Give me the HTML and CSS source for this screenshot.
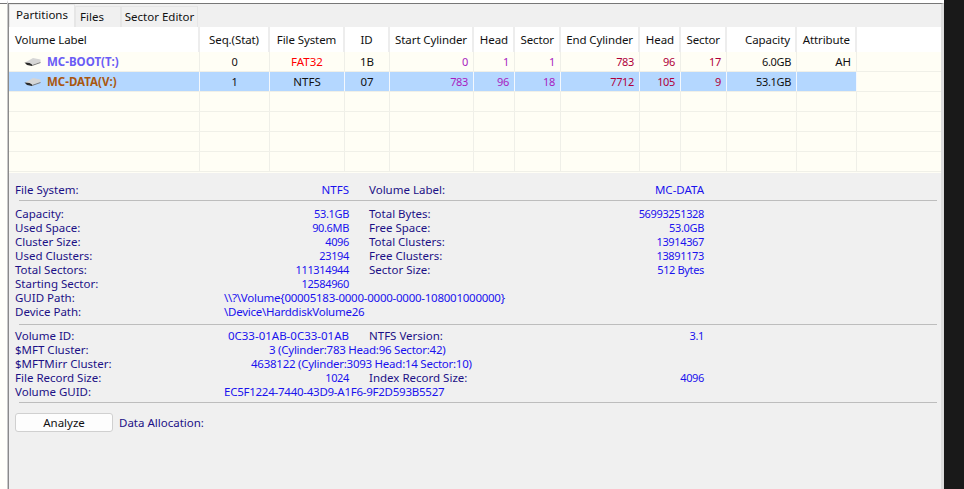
FILE: index.html
```html
<!DOCTYPE html>
<html>
<head>
<meta charset="utf-8">
<title>Partitions</title>
<link rel="stylesheet" href="styles.css">
</head>
<body>
<div class="app">
  <div class="leftstrip"></div>
  <div class="frame">
  <div class="panel">
    <div class="tabs">
      <div class="tab active">Partitions</div>
      <div class="tab t-files">Files</div>
      <div class="tab t-sector">Sector Editor</div>
    </div>
    <div class="table">
      <div class="row head">
        <div class="c c1 l">Volume Label</div><div class="c c2 m">Seq.(Stat)</div><div class="c c3 m">File System</div><div class="c c4 m">ID</div><div class="c c5 r">Start Cylinder</div><div class="c c6 r">Head</div><div class="c c7 r">Sector</div><div class="c c8 r">End Cylinder</div><div class="c c9 r">Head</div><div class="c c10 r">Sector</div><div class="c c11 r">Capacity</div><div class="c c12 r">Attribute</div><div class="c c13"></div>
      </div>
      <div class="row">
        <div class="c c1 vol boot"><svg class="disk" viewBox="0 0 17 9"><path d="M2 5 L9 1 L16.5 2.5 L16.5 5 L8 8 L2 6 Z" fill="#d6d6d6"/><path d="M8 8 L16.5 5 L16.5 6 L8 9 Z" fill="#7a7a7a"/><path d="M0.5 5.5 L5.5 6 L8 7.5 L8 9 L3 8 Z" fill="#2a2a2a"/></svg>MC-BOOT(T:)</div><div class="c c2 m n">0</div><div class="c c3 m red">FAT32</div><div class="c c4 m">1B</div><div class="c c5 r n pur">0</div><div class="c c6 r n pur">1</div><div class="c c7 r n pur">1</div><div class="c c8 r n mar">783</div><div class="c c9 r n mar">96</div><div class="c c10 r n mar">17</div><div class="c c11 r n">6.0GB</div><div class="c c12 r">AH</div><div class="c c13"></div>
      </div>
      <div class="row sel">
        <div class="c c1 vol data"><svg class="disk" viewBox="0 0 17 9"><path d="M2 5 L9 1 L16.5 2.5 L16.5 5 L8 8 L2 6 Z" fill="#d6d6d6"/><path d="M8 8 L16.5 5 L16.5 6 L8 9 Z" fill="#7a7a7a"/><path d="M0.5 5.5 L5.5 6 L8 7.5 L8 9 L3 8 Z" fill="#2a2a2a"/></svg>MC-DATA(V:)</div><div class="c c2 m n">1</div><div class="c c3 m">NTFS</div><div class="c c4 m">07</div><div class="c c5 r n pur">783</div><div class="c c6 r n pur">96</div><div class="c c7 r n pur">18</div><div class="c c8 r n mar">7712</div><div class="c c9 r n mar">105</div><div class="c c10 r n mar">9</div><div class="c c11 r n">53.1GB</div><div class="c c12 r"></div><div class="c c13 unsel"></div>
      </div>
      <div class="row"><div class="c c1"></div><div class="c c2"></div><div class="c c3"></div><div class="c c4"></div><div class="c c5"></div><div class="c c6"></div><div class="c c7"></div><div class="c c8"></div><div class="c c9"></div><div class="c c10"></div><div class="c c11"></div><div class="c c12"></div><div class="c c13"></div></div>
      <div class="row"><div class="c c1"></div><div class="c c2"></div><div class="c c3"></div><div class="c c4"></div><div class="c c5"></div><div class="c c6"></div><div class="c c7"></div><div class="c c8"></div><div class="c c9"></div><div class="c c10"></div><div class="c c11"></div><div class="c c12"></div><div class="c c13"></div></div>
      <div class="row"><div class="c c1"></div><div class="c c2"></div><div class="c c3"></div><div class="c c4"></div><div class="c c5"></div><div class="c c6"></div><div class="c c7"></div><div class="c c8"></div><div class="c c9"></div><div class="c c10"></div><div class="c c11"></div><div class="c c12"></div><div class="c c13"></div></div>
      <div class="row"><div class="c c1"></div><div class="c c2"></div><div class="c c3"></div><div class="c c4"></div><div class="c c5"></div><div class="c c6"></div><div class="c c7"></div><div class="c c8"></div><div class="c c9"></div><div class="c c10"></div><div class="c c11"></div><div class="c c12"></div><div class="c c13"></div></div>
    </div>
    <div class="info">
      <div class="grid first">
        <div class="k">File System:</div><div class="v a">NTFS</div><div class="k">Volume Label:</div><div class="v a">MC-DATA</div>
      </div>
      <div class="rule r1"></div>
      <div class="grid">
        <div class="k">Capacity:</div><div class="v">53.1GB</div><div class="k">Total Bytes:</div><div class="v">56993251328</div>
        <div class="k">Used Space:</div><div class="v">90.6MB</div><div class="k">Free Space:</div><div class="v">53.0GB</div>
        <div class="k">Cluster Size:</div><div class="v">4096</div><div class="k">Total Clusters:</div><div class="v">13914367</div>
        <div class="k">Used Clusters:</div><div class="v">23194</div><div class="k">Free Clusters:</div><div class="v">13891173</div>
        <div class="k">Total Sectors:</div><div class="v">111314944</div><div class="k">Sector Size:</div><div class="v">512 Bytes</div>
        <div class="k">Starting Sector:</div><div class="v">12584960</div><div class="k"></div><div class="v"></div>
        <div class="k">GUID Path:</div><div class="w">\\?\Volume{00005183-0000-0000-0000-108001000000}</div>
        <div class="k">Device Path:</div><div class="w">\Device\HarddiskVolume26</div>
      </div>
      <div class="rule r2"></div>
      <div class="grid">
        <div class="k">Volume ID:</div><div class="v a">0C33-01AB-0C33-01AB</div><div class="k">NTFS Version:</div><div class="v">3.1</div>
        <div class="k">$MFT Cluster:</div><div class="w w2">3 (Cylinder:783 Head:96 Sector:42)</div>
        <div class="k">$MFTMirr Cluster:</div><div class="w w3">4638122 (Cylinder:3093 Head:14 Sector:10)</div>
        <div class="k">File Record Size:</div><div class="v">1024</div><div class="k">Index Record Size:</div><div class="v">4096</div>
        <div class="k">Volume GUID:</div><div class="w">EC5F1224-7440-43D9-A1F6-9F2D593B5527</div>
      </div>
      <div class="rule r3"></div>
      <div class="actions">
        <button class="btn">Analyze</button>
        <div class="k alloc">Data Allocation:</div>
      </div>
    </div>
  </div>
  </div>
  <div class="rightgap"></div>
</div>
</body>
</html>
```
FILE: styles.css
```css
* { box-sizing: border-box; }
html, body { margin: 0; height: 100%; }
body { width: 964px; height: 489px; overflow: hidden; background: #191919; font-family: "Noto Sans", sans-serif; font-size: 11.5px; color: #111; }
.app { display: flex; height: 489px; background: #191919; }
.leftstrip { width: 8px; background: #fffffa; border-top: 3px solid #fff; border-right: 1px solid #c8c8c8; box-shadow: inset 0 1px 0 #777; }
.frame { width: 936px; height: 489px; padding-top: 3px; background: #fff; flex: none; }
.panel { height: 486px; background: #f0f0f0; border-top: 1px solid #777; border-left: 1px solid #8a8a8a; border-right: 3px solid #dcdcdc; display: flex; flex-direction: column; }
.rightgap { flex: 1; }
.tabs { display: flex; height: 23px; align-items: flex-end; }
.tab { height: 21px; line-height: 19px; background: #f0f0f0; border: 1px solid #e6e6e6; border-bottom: none; flex: none; }
.tab.active { height: 23px; width: 66px; line-height: 20px; background: #f8f8f8; text-align: center; }
.t-files { width: 46px; padding-left: 4px; }
.t-sector { width: 77px; text-align: center; }
.table { background: #fffef5; height: 146px; flex: none; }
.row { display: flex; height: 20px; border-bottom: 1px solid #f0f0e8; line-height: 19px; }
.row.head { height: 25px; line-height: 24px; background: #fff; border-bottom: none; }
.row.sel { line-height: 20px; }
.head .c { border-right: 2px solid #ededed; letter-spacing: -0.1px; padding-top: 1px; }
.c { border-right: 1px solid #efefe8; padding: 0 5px; white-space: nowrap; overflow: hidden; flex: none; }
.c13 { flex: 1; border-right: none; }
.head .c13 { border-right: none; }
.l { padding-left: 6px; }
.m { text-align: center; }
.r { text-align: right; }
.n { font-size: 11px; letter-spacing: -0.35px; }
.c1 { width: 191px; }
.c2 { width: 70px; }
.c3 { width: 75px; }
.c4 { width: 45px; }
.c5 { width: 84px; }
.c6 { width: 41px; }
.c7 { width: 46px; }
.c8 { width: 79px; }
.c9 { width: 41px; }
.c10 { width: 46px; }
.c11 { width: 70px; }
.c12 { width: 60px; }
.vol { font-weight: 700; display: flex; align-items: center; padding-left: 15px; }
.disk { width: 17px; height: 9px; margin-right: 6px; flex: none; }
.boot { color: #6a5cf5; }
.data { color: #a9570f; }
.sel .c { background: #b4d7ff; border-right-color: #f4f8fd; }
.sel .c.unsel { background: #fffef5; }
.red { color: #f00; }
.pur { color: #a81cc0; }
.mar { color: #b0003a; }
.info { padding: 10px 0 0 6px; }
.k { color: #1c1086; }
.v, .w { color: #1a12ee; white-space: nowrap; }
.v { text-align: right; padding-right: 20px; font-size: 11px; letter-spacing: -0.35px; }
.v.a { font-size: 11.5px; letter-spacing: 0; }
.grid { display: grid; grid-template-columns: 209px 145px 110px 245px; line-height: 14px; }
.w { grid-column: 2 / span 3; letter-spacing: -0.25px; }
.w2 { padding-left: 45px; }
.w3 { padding-left: 27px; }
.rule { height: 1px; background: #bdbdbd; margin-left: 4px; width: 918px; }
.first { margin-bottom: 3px; }
.r1 { margin-bottom: 6px; }
.r2 { margin-top: 5px; margin-bottom: 4px; }
.r3 { margin-top: 3px; margin-bottom: 10px; }
.actions { display: flex; align-items: center; }
.btn { width: 98px; height: 19px; margin: 0 6px 0 0; padding: 0; background: #fdfdfd; border: 1px solid #d0d0d0; border-radius: 3px; font: inherit; color: #111; }
```
